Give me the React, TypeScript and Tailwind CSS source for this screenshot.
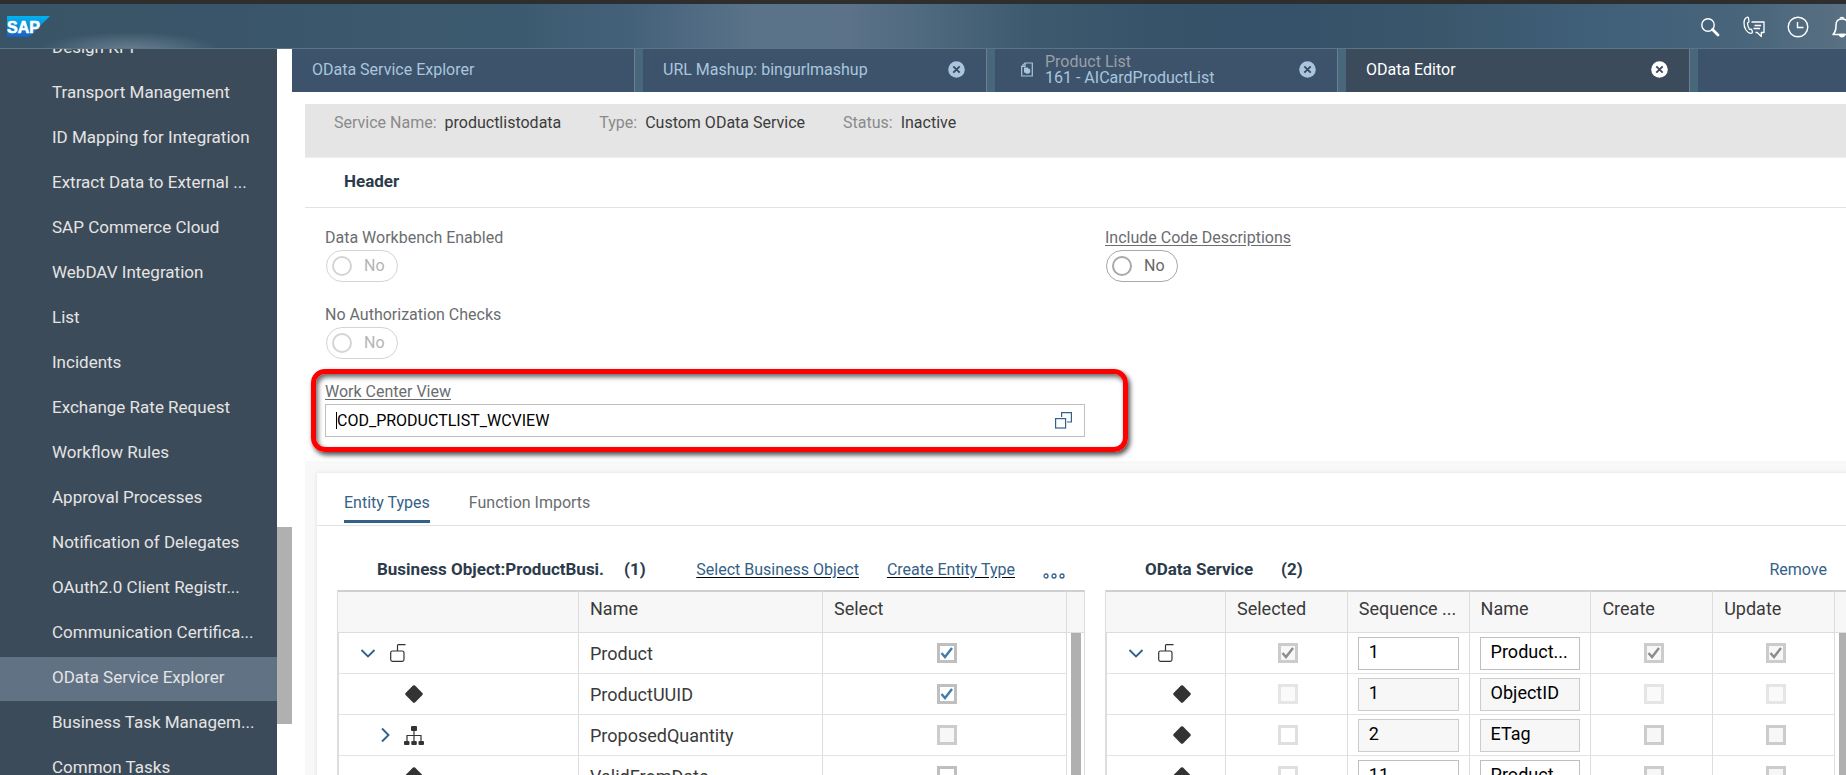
import type { ReactNode } from "react";
import clsx from "clsx";

const navItems = [
  "Design KPI",
  "Transport Management",
  "ID Mapping for Integration",
  "Extract Data to External ...",
  "SAP Commerce Cloud",
  "WebDAV Integration",
  "List",
  "Incidents",
  "Exchange Rate Request",
  "Workflow Rules",
  "Approval Processes",
  "Notification of Delegates",
  "OAuth2.0 Client Registr...",
  "Communication Certifica...",
  "OData Service Explorer",
  "Business Task Managem...",
  "Common Tasks",
];

type CheckKind = "on" | "onDisabled" | "off" | "offDisabled" | "faint" | "outline";

const checkStyles: Record<CheckKind, string> = {
  on: "border-[#bfbfbf] bg-white",
  onDisabled: "border-[#cccccc] bg-[#f7f7f7]",
  off: "border-[#bfbfbf] bg-white",
  offDisabled: "border-[#cccccc] bg-[#f7f7f7]",
  faint: "border-[#e5e5e5] bg-[#fafafa]",
  outline: "border-[#dfdfdf] bg-white",
};

const businessRows: { name: string; icon: "unlock" | "diamond" | "tree"; check: CheckKind }[] = [
  { name: "Product", icon: "unlock", check: "on" },
  { name: "ProductUUID", icon: "diamond", check: "on" },
  { name: "ProposedQuantity", icon: "tree", check: "offDisabled" },
  { name: "ValidFromDate", icon: "diamond", check: "off" },
];

const serviceRows: {
  seq: string;
  name: string;
  icon: "unlock" | "diamond";
  readOnly: boolean;
  selected: CheckKind;
  rights: CheckKind;
}[] = [
  { seq: "1", name: "Product...", icon: "unlock", readOnly: false, selected: "onDisabled", rights: "onDisabled" },
  { seq: "1", name: "ObjectID", icon: "diamond", readOnly: true, selected: "faint", rights: "faint" },
  { seq: "2", name: "ETag", icon: "diamond", readOnly: true, selected: "outline", rights: "offDisabled" },
  { seq: "11", name: "Product...", icon: "diamond", readOnly: false, selected: "outline", rights: "offDisabled" },
];

function SapLogo() {
  return (
    <svg width="43" height="21" viewBox="0 0 43 21" role="img" aria-label="SAP">
      <defs>
        <linearGradient id="sap" x1="0" y1="0" x2="0" y2="1">
          <stop offset="0" stopColor="#00b4f0" />
          <stop offset="1" stopColor="#1c5fc0" />
        </linearGradient>
      </defs>
      <path d="M0 0H43L22 21H0Z" fill="url(#sap)" />
      <text x="0" y="16.500" fontFamily="Liberation Sans, sans-serif" fontWeight="700" fontSize="16" fill="#fff" stroke="#fff" strokeWidth="0.600">
        SAP
      </text>
    </svg>
  );
}

function IconButton({ label, children }: { label: string; children: ReactNode }) {
  return (
    <button type="button" aria-label={label} className="flex size-6 shrink-0 items-center justify-center text-white">
      {children}
    </button>
  );
}

function SearchIcon() {
  return (
    <svg width="20" height="20" viewBox="0 0 20 20" fill="none" stroke="currentColor">
      <circle cx="8" cy="8" r="6.200" strokeWidth="1.400" />
      <path d="M12.500 12.500 18 18" strokeWidth="2.800" strokeLinecap="round" />
    </svg>
  );
}

function PhoneChatIcon() {
  return (
    <svg width="22" height="22" viewBox="0 0 22 22" fill="none" stroke="currentColor" strokeWidth="1.300" strokeLinejoin="round">
      <path d="M3.500 1.500Q5 .5 5.500 2L6 5.500Q6 6.500 4.500 6.800 4.300 10.500 6.500 13.300L8.500 13.200 9.500 16Q9.500 17.300 7.500 17.300 5 17 3 14 .8 10.500 1 6.500 1 3 3.500 1.500Z" />
      <path d="M8.500 6H21V16.500H18.300V20.500L14.300 16.500H12.500" />
      <path d="M11.500 9.500h6.500M10.500 12.500h6.500" />
    </svg>
  );
}

function ClockIcon() {
  return (
    <svg width="22" height="22" viewBox="0 0 22 22" fill="none" stroke="currentColor" strokeWidth="1.400">
      <circle cx="11" cy="11" r="9.800" />
      <path d="M10.500 6V11.500H16.500" />
    </svg>
  );
}

function BellIcon() {
  return (
    <svg width="20" height="22" viewBox="0 0 20 22" fill="none" stroke="currentColor" strokeWidth="1.500" strokeLinejoin="round">
      <path d="M1 18.500C4 15.500 4 13 4 9 4 5 6.500 3 10 3s6 2 6 6c0 4 0 6.500 3 9.500Z" />
      <path d="M8 2.500C8.500 1 11.500 1 12 2.500" />
      <path d="M7.500 18.500c.5 3 4.500 3 5 0Z" fill="currentColor" />
    </svg>
  );
}

function CloseButton({ label }: { label: string }) {
  return (
    <button type="button" aria-label={label} className="shrink-0">
      <svg width="17" height="17" viewBox="0 0 17 17">
        <circle cx="8.500" cy="8.500" r="8.300" fill="currentColor" />
        <path d="M5.300 5.300 11.700 11.700M11.700 5.300 5.300 11.700" stroke="#3c4b60" strokeWidth="1.900" />
      </svg>
    </button>
  );
}

function DocIcon() {
  return (
    <svg width="12" height="15" viewBox="0 0 12 15" fill="none" stroke="currentColor" strokeWidth="1.200">
      <path d="M4 1H11.300V14H.7V4.500Z" />
      <path d="M4 1V4.500H.7" />
      <rect x="3" y="5.500" width="4" height="5" fill="currentColor" stroke="none" />
      <circle cx="6.500" cy="9" r="2.800" fill="currentColor" stroke="none" />
    </svg>
  );
}

function ValueHelpIcon() {
  return (
    <svg width="17" height="17" viewBox="0 0 17 17" fill="none" stroke="#346187" strokeWidth="1.200">
      <rect x="0.600" y="6.600" width="10" height="9.400" />
      <path d="M6.600 5V.6H16.400V10H12" />
    </svg>
  );
}

function Chevron({ open }: { open: boolean }) {
  return (
    <svg width="16" height="16" viewBox="0 0 16 16" fill="none" stroke="#346187" strokeWidth="1.900">
      {open ? <path d="M1.500 5 8 11.500 14.500 5" /> : <path d="M5 1.500 11.500 8 5 14.500" />}
    </svg>
  );
}

function UnlockIcon() {
  return (
    <svg width="16" height="18" viewBox="0 0 16 18" fill="none" stroke="#333" strokeWidth="1.200">
      <rect x="0.700" y="7" width="13.300" height="10.300" rx="1.800" />
      <path d="M7.500 7V1.500Q7.500.7 8.300.7H15.500" />
    </svg>
  );
}

function DiamondIcon() {
  return (
    <svg width="18" height="18" viewBox="0 0 18 18">
      <path d="M8 .6Q9 -.2 10 .6L17.400 8Q18.200 9 17.400 10L10 17.400Q9 18.200 8 17.400L.6 10Q-.2 9 .6 8Z" fill="#333" />
    </svg>
  );
}

function TreeIcon() {
  return (
    <svg width="20" height="19" viewBox="0 0 20 19">
      <g fill="#333">
        <rect x="7" y="0" width="6" height="5" rx="1" />
        <rect x="0" y="15" width="5.500" height="4" rx="1" />
        <rect x="7.300" y="15" width="5.500" height="4" rx="1" />
        <rect x="14.500" y="15" width="5.500" height="4" rx="1" />
      </g>
      <path d="M10 5v10M3 15V9.500H17V15" fill="none" stroke="#333" strokeWidth="1.200" />
    </svg>
  );
}

function Tab({ active = false, className, children }: { active?: boolean; className: string; children: ReactNode }) {
  return (
    <div
      className={clsx(
        "flex h-[43px] shrink-0 items-center border-r border-[#6b7f92] pb-0.5 pl-5 pr-[21px]",
        active ? "bg-[#3c4b5c] text-white" : "bg-[#3c536b] text-[#a9c6de]",
        className,
      )}
    >
      {children}
    </div>
  );
}

function Switch({ id, label, disabled = false, underlined = false }: { id: string; label: string; disabled?: boolean; underlined?: boolean }) {
  return (
    <div>
      <label htmlFor={id} className={clsx("block h-[25px] leading-[26px] text-[#6a6d70]", underlined && "underline underline-offset-2")}>
        {label}
      </label>
      <button
        id={id}
        type="button"
        role="switch"
        aria-checked="false"
        disabled={disabled}
        className={clsx(
          "mx-px flex h-8 w-[72px] items-center gap-3 rounded-full border pl-[5px]",
          disabled ? "border-[#d4d4d4] text-[#b4b4b4]" : "border-[#a8a8a8] text-[#666666]",
        )}
      >
        <span className={clsx("size-5 rounded-full border-2", disabled ? "border-[#d4d4d4]" : "border-[#a8a8a8]")} />
        No
      </button>
    </div>
  );
}

function Check({ kind, label }: { kind: CheckKind; label: string }) {
  const checked = kind === "on" || kind === "onDisabled";
  return (
    <span className="ml-1 grid place-items-center">
      <input
        type="checkbox"
        aria-label={label}
        defaultChecked={checked}
        disabled={kind !== "on" && kind !== "off"}
        className={clsx("col-start-1 row-start-1 size-5 appearance-none border-3", checkStyles[kind])}
      />
      {checked && (
        <svg width="14" height="14" viewBox="0 0 14 14" className="pointer-events-none col-start-1 row-start-1">
          <path d="M1.500 7 5 11 12 2" fill="none" stroke={kind === "on" ? "#427cac" : "#8c8c8c"} strokeWidth="2.400" />
        </svg>
      )}
    </span>
  );
}

function HeadCell({ children }: { children?: ReactNode }) {
  return (
    <th className="h-[43px] border-b border-r border-t-2 border-b-[#dddddd] border-r-[#dddddd] border-t-[#cfcfcf] bg-[#f7f7f7] pb-2 pl-[11px] text-left font-normal">
      {children}
    </th>
  );
}

function Cell({ className, children }: { className?: string; children?: ReactNode }) {
  return <td className={clsx("h-[41px] border-b border-r border-b-[#e2e2e2] border-r-[#dddddd] p-0", className)}>{children}</td>;
}

function ScrollCell() {
  return (
    <td className="border-r border-[#dddddd] p-0">
      <div className="mx-auto h-[41px] w-[10px] bg-[#b0b0b0]" />
    </td>
  );
}

function TreeCell({ icon }: { icon: "unlock" | "diamond" | "tree" }) {
  return (
    <Cell className="border-l border-l-[#dddddd]">
      {icon === "unlock" && (
        <span className="flex items-center gap-[14px] pl-[21px]">
          <button type="button" aria-label="Collapse">
            <Chevron open />
          </button>
          <UnlockIcon />
        </span>
      )}
      {icon === "diamond" && (
        <span className="flex pl-[66px]">
          <DiamondIcon />
        </span>
      )}
      {icon === "tree" && (
        <span className="flex items-center gap-[11px] pl-[38px]">
          <button type="button" aria-label="Expand">
            <Chevron open={false} />
          </button>
          <TreeIcon />
        </span>
      )}
    </Cell>
  );
}

const cellInput = "block h-[33px] w-full border px-[10px] pb-1 text-black";

function ShellHeader() {
  return (
    <header className="flex h-[49px] shrink-0 items-center justify-between overflow-hidden border-b border-t-4 border-b-[#5a7683] border-t-[#2e2e2e] bg-[radial-gradient(90px_18px_at_130px_46px,rgba(150,170,185,0.5),transparent),linear-gradient(90deg,#3a5467_0%,#3a5569_12%,#3c5a6f_28%,#44617a_34%,#5a7389_41%,#5b7288_46%,#4c677b_51%,#3d596d_56%,#36536a_63%,#35526a_70%,#3a566b_78%,#40607a_87%,#47647a_94%,#5a7083_100%)] pl-[7px]">
      <a href="#home">
        <SapLogo />
      </a>
      <div className="-mr-2 flex gap-5 pt-0.5">
        <IconButton label="Search">
          <SearchIcon />
        </IconButton>
        <IconButton label="Live activity">
          <PhoneChatIcon />
        </IconButton>
        <IconButton label="Recent">
          <ClockIcon />
        </IconButton>
        <IconButton label="Notifications">
          <BellIcon />
        </IconButton>
      </div>
    </header>
  );
}

function Sidebar() {
  return (
    <div className="flex shrink-0 overflow-hidden">
      <nav className="w-[277px] bg-[#3c4b59]">
        <ul className="-mt-[22px] flex flex-col gap-px">
          {navItems.map((item) => (
            <li key={item}>
              <a
                href="#nav"
                className={clsx(
                  "flex h-11 items-center whitespace-nowrap pb-0.5 pl-[52px] text-[17px] text-[#e4e4e4]",
                  item === "OData Service Explorer" && "bg-[#617285]",
                )}
              >
                {item}
              </a>
            </li>
          ))}
        </ul>
      </nav>
      {/* scrollbar */}
      <div className="w-[15px] bg-white pt-[478px]">
        <div className="h-[197px] bg-[#b0b0b0]" />
      </div>
    </div>
  );
}

function ServiceFact({ label, value }: { label: string; value: string }) {
  return (
    <div className="flex gap-2">
      <dt className="text-[#8a8a8a]">{label}</dt>
      <dd className="text-[#3c3c3c]">{value}</dd>
    </div>
  );
}

function BusinessObjectTable() {
  return (
    <section>
      <div className="flex h-16 items-center whitespace-nowrap pb-2 pl-10 pr-5 pt-8">
        <h2 className="text-[17px] font-bold text-[#2c3b4b]">Business Object:ProductBusi.</h2>
        <span className="ml-5 text-[17px] font-bold text-[#2c3b4b]">(1)</span>
        <div className="ml-auto flex items-center gap-7 text-[#346187]">
          <a href="#select" className="underline decoration-black underline-offset-2">
            Select Business Object
          </a>
          <a href="#create" className="underline decoration-black underline-offset-2">
            Create Entity Type
          </a>
          <button type="button" aria-label="More actions" className="pt-3">
            <svg width="22" height="6" viewBox="0 0 22 6" fill="none" stroke="currentColor" strokeWidth="1.300">
              <circle cx="3" cy="3" r="2" />
              <circle cx="11" cy="3" r="2" />
              <circle cx="19" cy="3" r="2" />
            </svg>
          </button>
        </div>
      </div>
      <table className="w-full table-fixed border-separate border-spacing-0 border-l border-[#dddddd] text-[18px] text-[#3a3a3a]">
        <colgroup>
          <col className="w-[241px]" />
          <col />
          <col />
          <col className="w-[18px]" />
        </colgroup>
        <thead>
          <tr>
            <HeadCell />
            <HeadCell>Name</HeadCell>
            <HeadCell>Select</HeadCell>
            <HeadCell />
          </tr>
        </thead>
        <tbody>
          {businessRows.map((row) => (
            <tr key={row.name}>
              <TreeCell icon={row.icon} />
              <Cell className="pl-[11px]">{row.name}</Cell>
              <Cell>
                <Check kind={row.check} label={`Select ${row.name}`} />
              </Cell>
              <ScrollCell />
            </tr>
          ))}
        </tbody>
      </table>
    </section>
  );
}

function ODataServiceTable() {
  return (
    <section>
      <div className="flex h-16 items-center whitespace-nowrap pb-2 pl-10 pr-[26px] pt-8">
        <h2 className="text-[17px] font-bold text-[#2c3b4b]">OData Service</h2>
        <span className="ml-7 text-[17px] font-bold text-[#2c3b4b]">(2)</span>
        <button type="button" className="ml-auto text-[#346187]">
          Remove
        </button>
      </div>
      <table className="w-full table-fixed border-separate border-spacing-0 border-l border-[#dddddd] text-[18px] text-[#3a3a3a]">
        <colgroup>
          <col className="w-[120px]" />
          <col />
          <col />
          <col />
          <col />
          <col />
          <col className="w-[18px]" />
        </colgroup>
        <thead>
          <tr>
            <HeadCell />
            <HeadCell>Selected</HeadCell>
            <HeadCell>Sequence ...</HeadCell>
            <HeadCell>Name</HeadCell>
            <HeadCell>Create</HeadCell>
            <HeadCell>Update</HeadCell>
            <HeadCell />
          </tr>
        </thead>
        <tbody>
          {serviceRows.map((row, i) => (
            <tr key={i}>
              <TreeCell icon={row.icon} />
              <Cell>
                <Check kind={row.selected} label="Selected" />
              </Cell>
              <Cell className="px-[10px]">
                <input
                  aria-label="Sequence number"
                  defaultValue={row.seq}
                  readOnly={row.readOnly}
                  className={clsx(cellInput, row.readOnly ? "border-[#cccccc] bg-[#f7f7f7]" : "border-[#bfbfbf] bg-white")}
                />
              </Cell>
              <Cell className="px-[10px]">
                <input
                  aria-label="Name"
                  defaultValue={row.name}
                  readOnly={row.readOnly}
                  className={clsx(cellInput, row.readOnly ? "border-[#cccccc] bg-[#f7f7f7]" : "border-[#bfbfbf] bg-white")}
                />
              </Cell>
              <Cell>
                <Check kind={row.rights} label="Create" />
              </Cell>
              <Cell>
                <Check kind={row.rights} label="Update" />
              </Cell>
              <ScrollCell />
            </tr>
          ))}
        </tbody>
      </table>
    </section>
  );
}

export default function App() {
  return (
    <div className="flex h-screen flex-col overflow-hidden bg-white font-[Roboto,sans-serif] text-base">
      <ShellHeader />
      <div className="flex min-h-0 flex-1">
        <Sidebar />
        <main className="min-w-0 flex-1 overflow-hidden">
          {/* Open documents */}
          <div className="flex gap-2 overflow-hidden bg-[#48677a]">
            <Tab className="w-[343px]">OData Service Explorer</Tab>
            <Tab className="w-[344px] justify-between">
              URL Mashup: bingurlmashup
              <CloseButton label="Close URL Mashup" />
            </Tab>
            <Tab className="w-[343px]">
              <span className="ml-[6px]">
                <DocIcon />
              </span>
              <span className="ml-3 flex-1 leading-4">
                <span className="block text-[#9aa0a6]">Product List</span>
                161 - AICardProductList
              </span>
              <CloseButton label="Close Product List" />
            </Tab>
            <Tab active className="w-[344px] justify-between">
              OData Editor
              <CloseButton label="Close OData Editor" />
            </Tab>
            <div className="h-[43px] flex-1 bg-[#3c536b]" />
          </div>

          <div className="-mr-[39px] pl-[13px] pt-3">
            <dl className="flex h-[54px] gap-[38px] border-b border-[#eeeeee] bg-[#e5e5e5] pl-[29px] pt-[7px]">
              <ServiceFact label="Service Name:" value="productlistodata" />
              <ServiceFact label="Type:" value="Custom OData Service" />
              <ServiceFact label="Status:" value="Inactive" />
            </dl>
            <h1 className="flex h-[50px] items-center border-b border-[#e2e2e2] pb-0.5 pl-[39px] text-[17px] font-bold text-[#2c3b4b]">Header</h1>

            <div className="grid grid-cols-2 gap-5 px-5 pb-6 pt-[17px]">
              <div className="flex flex-col gap-5">
                <Switch id="workbench" label="Data Workbench Enabled" disabled />
                <Switch id="noauth" label="No Authorization Checks" disabled />
                <div className="relative">
                  <label htmlFor="wcview" className="block h-[25px] leading-[26px] text-[#6a6d70] underline underline-offset-2">
                    Work Center View
                  </label>
                  <div className="flex h-[33px] items-center border border-[#bfbfbf] pl-[10px] pr-3">
                    <span className="h-[17px] w-px bg-black" />
                    <input id="wcview" defaultValue="COD_PRODUCTLIST_WCVIEW" className="min-w-0 flex-1 text-black outline-none" />
                    <button type="button" aria-label="Value help">
                      <ValueHelpIcon />
                    </button>
                  </div>
                  <div className="pointer-events-none absolute -bottom-[15px] -left-[14px] -right-[43px] -top-[10px] rounded-[14px] border-5 border-[#ff0000] shadow-[2px_3px_5px_rgba(0,0,0,0.7),inset_2px_3px_5px_rgba(0,0,0,0.6)]" />
                </div>
              </div>
              <div>
                <Switch id="codes" label="Include Code Descriptions" underlined />
              </div>
            </div>

            <div className="bg-[#f8f8f8] px-3 pt-3">
              <div className="bg-white shadow-[0_0_4px_rgba(0,0,0,0.1)]">
                <div role="tablist" className="flex h-[53px] gap-[39px] border-b border-[#e2e2e2] pl-[27px] pt-[14px]">
                  <button type="button" role="tab" aria-selected="true" className="mb-[2px] flex border-b-3 border-[#346187] pt-1 text-[#346187]">
                    Entity Types
                  </button>
                  <button type="button" role="tab" aria-selected="false" className="mb-[5px] flex pt-1 text-[#6a6d70]">
                    Function Imports
                  </button>
                </div>
                <div className="grid grid-cols-2 gap-5 px-5">
                  <BusinessObjectTable />
                  <ODataServiceTable />
                </div>
              </div>
            </div>
          </div>
        </main>
      </div>
    </div>
  );
}
